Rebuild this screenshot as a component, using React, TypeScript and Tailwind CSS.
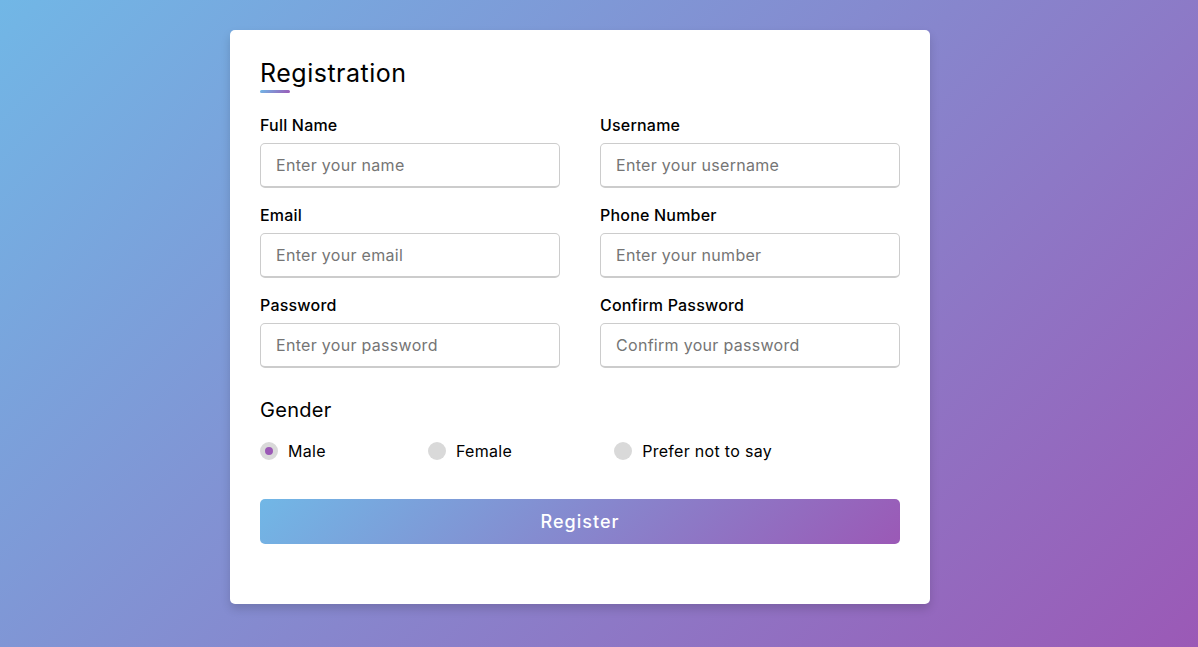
import { useState } from "react";

const fields = [
  { label: "Full Name", placeholder: "Enter your name" },
  { label: "Username", placeholder: "Enter your username" },
  { label: "Email", placeholder: "Enter your email" },
  { label: "Phone Number", placeholder: "Enter your number" },
  { label: "Password", placeholder: "Enter your password" },
  { label: "Confirm Password", placeholder: "Confirm your password" },
];

const genders = ["Male", "Female", "Prefer not to say"];

export default function App() {
  const [gender, setGender] = useState("Male");

  return (
    <div className="min-h-[647px] w-full bg-[linear-gradient(135deg,#71b7e6,#9b59b6)] flex justify-center pt-[30px] pr-[38px] font-['Inter',sans-serif] text-black">
      <div className="w-[700px] h-[574px] bg-white rounded-[5px] px-[30px] pt-[25px] shadow-[0_5px_10px_rgba(0,0,0,0.15)]">
        <div className="relative text-[25px] font-normal tracking-[0.5px] leading-[37.5px] w-fit">
          Registration
          <span className="absolute left-0 bottom-0 h-[3px] w-[30px] rounded-[5px] bg-[linear-gradient(135deg,#71b7e6,#9b59b6)]" />
        </div>

        <form onSubmit={(e) => e.preventDefault()}>
          <div className="flex flex-wrap justify-between mt-[20px] mb-[12px]">
            {fields.map((f) => (
              <div key={f.label} className="w-[300px] mb-[15px]">
                <span className="block font-medium text-[16px] tracking-[0.2px] leading-[25px] mb-[5px]">{f.label}</span>
                <input
                  type="text"
                  placeholder={f.placeholder}
                  className="h-[45px] w-full outline-none text-[16px] tracking-[0.3px] rounded-[5px] pl-[15px] border border-[#ccc] border-b-2 placeholder:text-[#757575]"
                />
              </div>
            ))}
          </div>

          <div>
            <span className="block text-[20px] font-normal tracking-[0.3px] leading-[30px]">Gender</span>
            <div className="flex justify-between w-[80%] my-[14px]">
              {genders.map((g) => (
                <label key={g} className="flex items-center cursor-pointer leading-[24px]" onClick={() => setGender(g)}>
                  <span
                    className={
                      gender === g
                        ? "h-[18px] w-[18px] rounded-full mr-[10px] bg-[#9b59b6] border-[5px] border-[#d9d9d9]"
                        : "h-[18px] w-[18px] rounded-full mr-[10px] bg-[#d9d9d9] border-[5px] border-transparent"
                    }
                  />
                  <span className="text-[16px] tracking-[0.3px]">{g}</span>
                </label>
              ))}
            </div>
          </div>

          <div className="mt-[36px]">
            <button
              type="submit"
              className="h-[45px] w-full rounded-[5px] text-white text-[18px] font-medium tracking-[1px] bg-[linear-gradient(135deg,#71b7e6,#9b59b6)] cursor-pointer"
            >
              Register
            </button>
          </div>
        </form>
      </div>
    </div>
  );
}
